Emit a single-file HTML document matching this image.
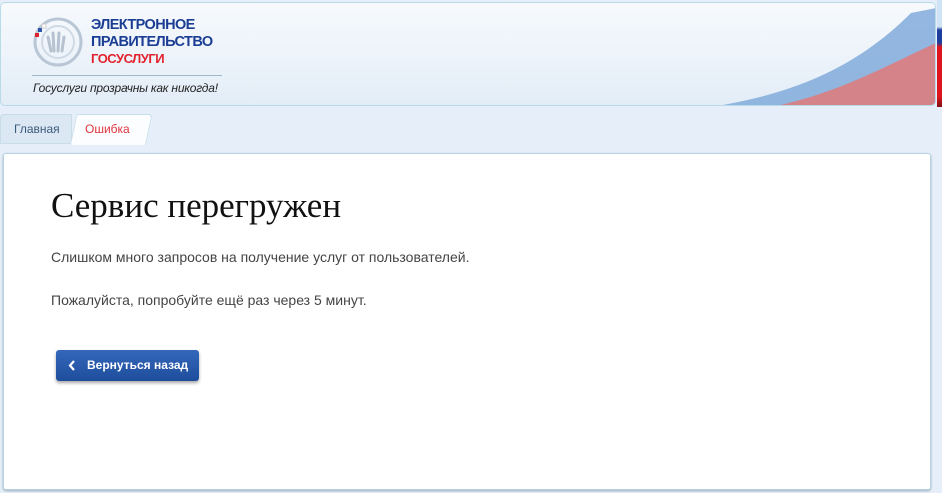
<!DOCTYPE html>
<html><head><meta charset="utf-8"><style>
body{margin:0;width:942px;height:493px;background:#e6eff9;position:relative;overflow:hidden;font-family:"Liberation Sans",sans-serif}
.hdr{position:absolute;left:0;top:2px;width:936px;height:104px;border:1px solid #b9dbe8;border-radius:5px;background:linear-gradient(#f7fafd,#e3edf7);overflow:hidden;box-sizing:border-box}
.flag{position:absolute;left:937px;top:0;width:5px;height:107px;background:linear-gradient(#cfe3f5 0,#cfe3f5 25%,#1d3e9c 28%,#1d3e9c 40%,#e0141e 44%,#e0141e 90%,#801010 100%)}
.t1{position:absolute;left:90px;top:14px;color:#1b3e94;font-weight:bold;font-size:14.5px;line-height:17px;letter-spacing:-0.6px}
.t2{position:absolute;left:90px;top:48px;color:#e2232e;font-weight:bold;font-size:13px;letter-spacing:-0.5px}
.line{position:absolute;left:31px;top:72px;width:190px;height:1px;background:#9fb8cc}
.slog{position:absolute;left:32px;top:78px;font-style:italic;font-size:12px;color:#222;letter-spacing:-0.2px}
.tabs{position:absolute;left:0;top:114px;height:31px;width:146px}
.tab1{position:absolute;left:0;top:0;width:72px;height:30px;background:#dbe8f4;border:1px solid #c8dcea;border-radius:4px 0 0 0;box-sizing:border-box}
.tab2{position:absolute;left:70px;top:0;width:76px;height:31px;background:#fbfdff;border:1px solid #c8e0ec;border-bottom:none;border-radius:0 4px 0 0;box-sizing:border-box;transform:skewX(-12deg);transform-origin:bottom}
.tt{position:absolute;top:122px;font-size:12px}
.box{position:absolute;left:3px;top:153px;width:928px;height:337px;background:#fff;border:1px solid #b8d4e2;border-radius:3px;box-sizing:border-box;box-shadow:0 1px 2px #9ab}
h1{position:absolute;left:51px;top:186px;margin:0;font-family:"Liberation Serif",serif;font-weight:normal;font-size:35px;color:#111}
.p{position:absolute;left:51px;font-size:14px;color:#444}
.btn{position:absolute;left:56px;top:350px;width:143px;height:31px;border-radius:3px;background:linear-gradient(#3467bb,#1e4d9c);box-shadow:0 2px 3px rgba(0,0,0,.35);color:#fff;font-weight:bold;font-size:12px;line-height:31px}
</style></head><body>
<div class="hdr">
<svg style="position:absolute;left:650px;top:0" width="290" height="104" viewBox="0 0 290 104">
<path d="M60 104 C150 90 210 60 260 10 L285 5 L285 104Z" fill="#7aa6d8" opacity=".8"/>
<path d="M120 104 C190 90 240 60 285 40 L285 104Z" fill="#e07a7a" opacity=".85"/>
</svg>
<svg style="position:absolute;left:30px;top:12px" width="54" height="54" viewBox="0 0 54 54">
<circle cx="27" cy="27" r="23" fill="none" stroke="#b9c6d6" stroke-width="3"/>
<circle cx="27" cy="27" r="16" fill="none" stroke="#cfd9e4" stroke-width="2"/>
<path d="M20 36 L17 22 M23 36 L22 18 M27 36 L28 18 M31 36 L33 22" stroke="#b6c2d0" stroke-width="3" stroke-linecap="round"/>
<rect x="4" y="18" width="4" height="4" fill="#e2232e"/><rect x="7" y="13" width="4" height="4" fill="#2a55a8"/><rect x="11" y="9" width="4" height="4" fill="#fff" stroke="#ccc"/>
</svg>
<div class="t1">ЭЛЕКТРОННОЕ<br>ПРАВИТЕЛЬСТВО</div>
<div class="t2">ГОСУСЛУГИ</div>
<div class="line"></div>
<div class="slog">Госуслуги прозрачны как никогда!</div>
</div>
<div class="flag"></div>
<div class="tabs"><div class="tab1"></div><div class="tab2"></div></div>
<div class="tt" style="left:14px;color:#3d5a7a">Главная</div>
<div class="tt" style="left:85px;color:#e2343e">Ошибка</div>
<div class="box"></div>
<h1>Сервис перегружен</h1>
<div class="p" style="top:249px">Слишком много запросов на получение услуг от пользователей.</div>
<div class="p" style="top:292px">Пожалуйста, попробуйте ещё раз через 5 минут.</div>
<div class="btn"><svg style="position:absolute;left:12px;top:10px" width="8" height="11" viewBox="0 0 8 11"><path d="M6 1 L2 5.5 L6 10" stroke="#fff" stroke-width="2.2" fill="none"/></svg><span style="position:absolute;left:31px">Вернуться назад</span></div>
</body></html>
